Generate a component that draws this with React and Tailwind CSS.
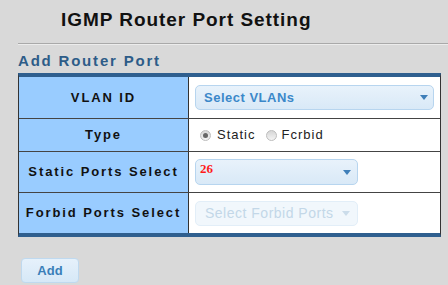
import React from 'react';

const Caret = ({ color = '#3f7fb9' }) => (
  <svg width="8" height="5" viewBox="0 0 8 5" className="shrink-0">
    <path d="M0 0 L8 0 L4 5 Z" fill={color} />
  </svg>
);

const Radio = ({ checked }) => (
  <span className="w-[11px] h-[11px] rounded-full border border-[#bdbdbd] bg-gradient-to-b from-[#d6d6d6] to-[#f4f4f4] flex items-center justify-center">
    {checked && <span className="w-[5px] h-[5px] rounded-full bg-[#666]" />}
  </span>
);

const Label = ({ children }) => (
  <div className="w-[170px] shrink-0 bg-[#99ccff] border-r border-[#333] flex items-center justify-center text-[13px] font-bold tracking-[1.9px] text-[#111]">
    {children}
  </div>
);

export default function App() {
  return (
    <div className="w-[448px] h-[285px] bg-[#d9d9d9] font-['Liberation_Sans',Arial,sans-serif] overflow-hidden">
      <h1 className="h-[43px] pl-[61px] pt-[6px] text-[19px] font-bold text-[#111] tracking-[0.95px]">
        IGMP Router Port Setting
      </h1>
      <div className="ml-[18px] border-t border-[#a9a9a9] border-b border-b-[#ececec]" />
      <div className="ml-[18px] mr-[7px]">
        <div className="h-[28px] pt-[7px] text-[15px] font-bold tracking-[1.8px] text-[#2d5c88] leading-[18px]">
          Add Router Port
        </div>
        <div className="border-t-4 border-b-4 border-t-[#2f5f8f] border-b-[#2f5f8f] border-x border-x-[#333] bg-white">
          <div className="flex h-[42px] border-b border-[#444]">
            <Label>VLAN ID</Label>
            <div className="flex-1 flex items-center px-[6px]">
              <div className="flex-1 h-[25px] rounded-[5px] border border-[#b7d5ef] bg-gradient-to-b from-[#e8f2fb] to-[#d9e9f7] flex items-center justify-between pl-[8px] pr-[5px]">
                <span className="text-[13px] font-bold text-[#3b88c9] tracking-[0.5px]">Select VLANs</span>
                <Caret />
              </div>
            </div>
          </div>
          <div className="flex h-[33px] border-b border-[#444]">
            <Label>Type</Label>
            <div className="flex-1 flex items-center pl-[11px] text-[13px] text-[#222] tracking-[1px]">
              <Radio checked />
              <span className="ml-[6px]">Static</span>
              <span className="ml-[10px]"><Radio /></span>
              <span className="ml-[5px]">Fcrbid</span>
            </div>
          </div>
          <div className="flex h-[41px] border-b border-[#444]">
            <Label>Static Ports Select</Label>
            <div className="flex-1 flex items-center px-[6px]">
              <div className="w-[163px] h-[26px] rounded-[5px] border border-[#b7d5ef] bg-gradient-to-b from-[#e8f2fb] to-[#d9e9f7] flex items-center justify-between pl-[4px] pr-[6px]">
                <span className="text-[13px] font-bold text-[#ff1a1a] font-['Liberation_Serif',serif] -mt-[6px]">26</span>
                <Caret />
              </div>
            </div>
          </div>
          <div className="flex h-[40px]">
            <Label>Forbid Ports Select</Label>
            <div className="flex-1 flex items-center px-[6px]">
              <div className="w-[163px] h-[25px] rounded-[5px] border border-[#e2eef8] bg-[#f1f7fc] flex items-center justify-between pl-[9px] pr-[7px]">
                <span className="text-[14px] text-[#c3d7e8] tracking-[0.5px]">Select Forbid Ports</span>
                <Caret color="#cbdcea" />
              </div>
            </div>
          </div>
        </div>
      </div>
      <div className="pl-[21px] pt-[21px]">
        <button className="w-[58px] h-[25px] rounded-[4px] border border-[#bfd9ef] bg-gradient-to-b from-[#e6f1fb] to-[#d6e8f7] text-[13px] font-bold text-[#3a7fb8]">
          Add
        </button>
      </div>
    </div>
  );
}
